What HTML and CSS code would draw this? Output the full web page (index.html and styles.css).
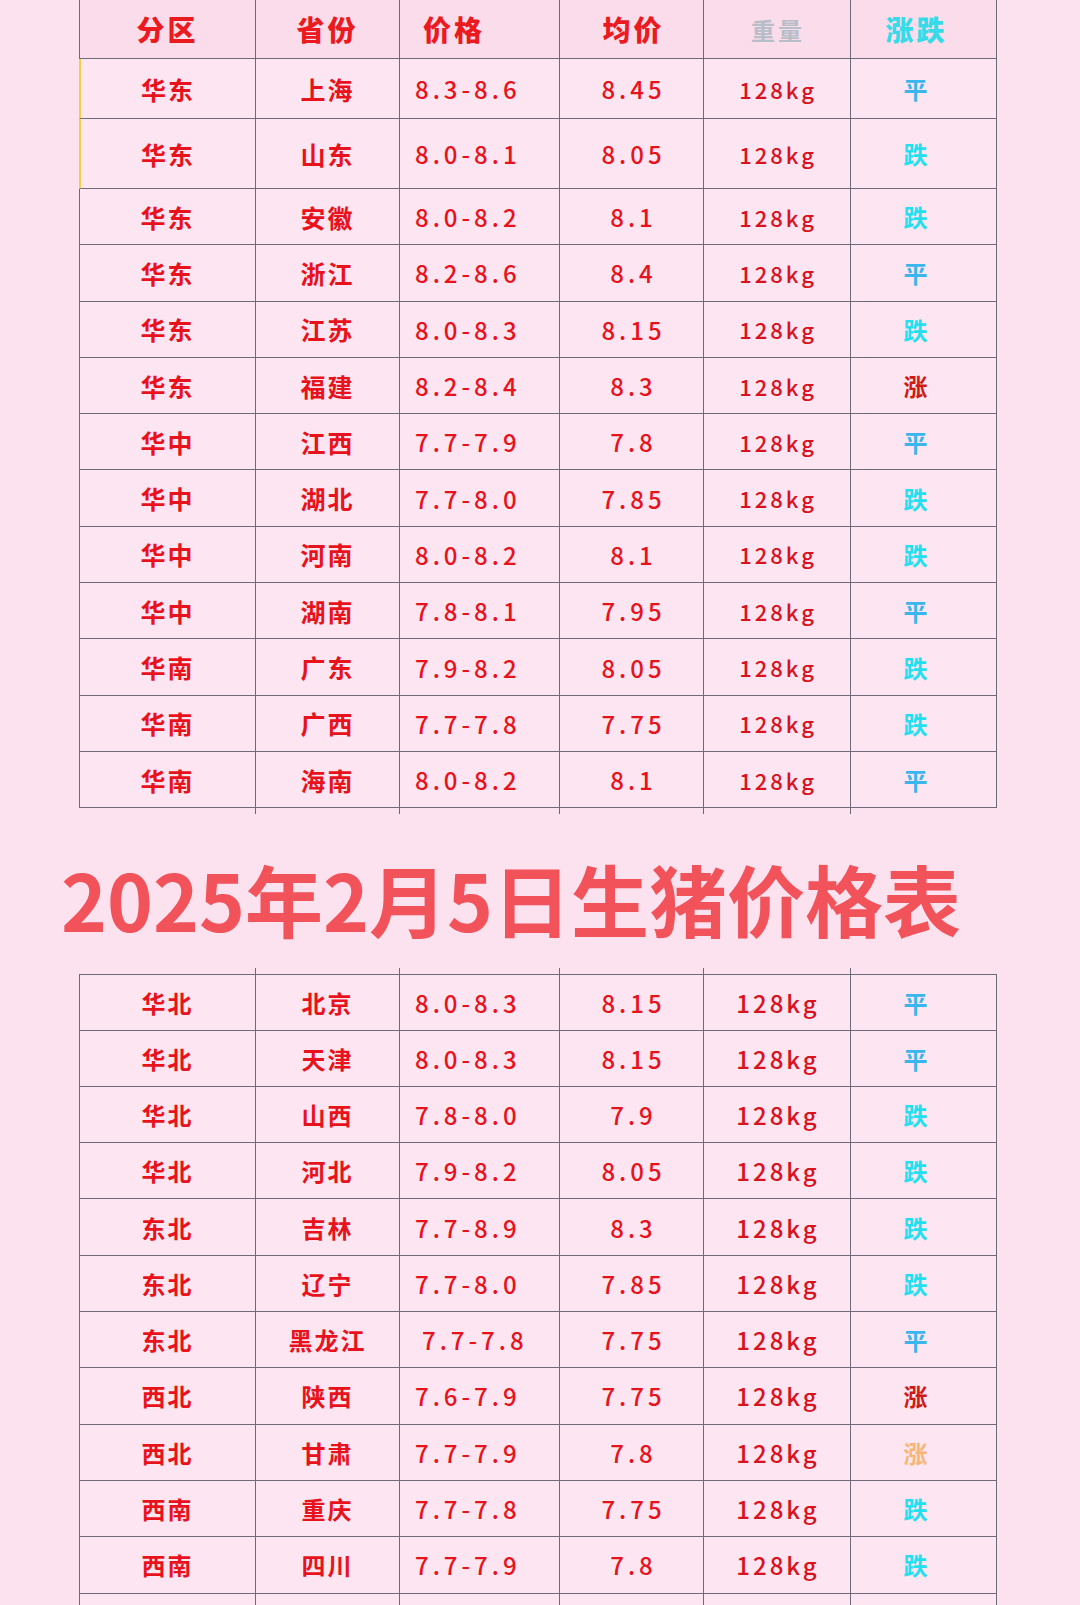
FILE: index.html
```html
<!DOCTYPE html>
<html lang="zh-CN">
<head>
<meta charset="utf-8">
<title>2025年2月5日生猪价格表</title>
<link rel="stylesheet" href="styles.css">
</head>
<body>
<div class="page">
  <div class="table table-top">
    <div class="row head">
      <div class="cell c-region">分区</div>
      <div class="cell c-prov">省份</div>
      <div class="cell c-range h-range">价格</div>
      <div class="cell c-avg">均价</div>
      <div class="cell c-wt h-wt">重量</div>
      <div class="cell c-trend h-trend">涨跌</div>
    </div>
    <div class="row r-first mark"><div class="cell c-region">华东</div><div class="cell c-prov">上海</div><div class="cell c-range">8.3-8.6</div><div class="cell c-avg">8.45</div><div class="cell c-wt">128kg</div><div class="cell c-trend flat">平</div></div>
    <div class="row r-second mark"><div class="cell c-region">华东</div><div class="cell c-prov">山东</div><div class="cell c-range">8.0-8.1</div><div class="cell c-avg">8.05</div><div class="cell c-wt">128kg</div><div class="cell c-trend down">跌</div></div>
    <div class="row"><div class="cell c-region">华东</div><div class="cell c-prov">安徽</div><div class="cell c-range">8.0-8.2</div><div class="cell c-avg">8.1</div><div class="cell c-wt">128kg</div><div class="cell c-trend down">跌</div></div>
    <div class="row"><div class="cell c-region">华东</div><div class="cell c-prov">浙江</div><div class="cell c-range">8.2-8.6</div><div class="cell c-avg">8.4</div><div class="cell c-wt">128kg</div><div class="cell c-trend flat">平</div></div>
    <div class="row"><div class="cell c-region">华东</div><div class="cell c-prov">江苏</div><div class="cell c-range">8.0-8.3</div><div class="cell c-avg">8.15</div><div class="cell c-wt">128kg</div><div class="cell c-trend down">跌</div></div>
    <div class="row"><div class="cell c-region">华东</div><div class="cell c-prov">福建</div><div class="cell c-range">8.2-8.4</div><div class="cell c-avg">8.3</div><div class="cell c-wt">128kg</div><div class="cell c-trend up">涨</div></div>
    <div class="row"><div class="cell c-region">华中</div><div class="cell c-prov">江西</div><div class="cell c-range">7.7-7.9</div><div class="cell c-avg">7.8</div><div class="cell c-wt">128kg</div><div class="cell c-trend flat">平</div></div>
    <div class="row"><div class="cell c-region">华中</div><div class="cell c-prov">湖北</div><div class="cell c-range">7.7-8.0</div><div class="cell c-avg">7.85</div><div class="cell c-wt">128kg</div><div class="cell c-trend down">跌</div></div>
    <div class="row"><div class="cell c-region">华中</div><div class="cell c-prov">河南</div><div class="cell c-range">8.0-8.2</div><div class="cell c-avg">8.1</div><div class="cell c-wt">128kg</div><div class="cell c-trend down">跌</div></div>
    <div class="row"><div class="cell c-region">华中</div><div class="cell c-prov">湖南</div><div class="cell c-range">7.8-8.1</div><div class="cell c-avg">7.95</div><div class="cell c-wt">128kg</div><div class="cell c-trend flat">平</div></div>
    <div class="row"><div class="cell c-region">华南</div><div class="cell c-prov">广东</div><div class="cell c-range">7.9-8.2</div><div class="cell c-avg">8.05</div><div class="cell c-wt">128kg</div><div class="cell c-trend down">跌</div></div>
    <div class="row"><div class="cell c-region">华南</div><div class="cell c-prov">广西</div><div class="cell c-range">7.7-7.8</div><div class="cell c-avg">7.75</div><div class="cell c-wt">128kg</div><div class="cell c-trend down">跌</div></div>
    <div class="row"><div class="cell c-region">华南</div><div class="cell c-prov">海南</div><div class="cell c-range">8.0-8.2</div><div class="cell c-avg">8.1</div><div class="cell c-wt">128kg</div><div class="cell c-trend flat">平</div></div>
    <div class="row stub"><div class="cell"></div><div class="cell"></div><div class="cell"></div><div class="cell"></div><div class="cell"></div><div class="cell"></div></div>
  </div>

  <h1 class="title">2025年2月5日生猪价格表</h1>

  <div class="table table-bottom">
    <div class="row stub stub-top"><div class="cell"></div><div class="cell"></div><div class="cell"></div><div class="cell"></div><div class="cell"></div><div class="cell"></div></div>
    <div class="row r-open"><div class="cell c-region">华北</div><div class="cell c-prov">北京</div><div class="cell c-range">8.0-8.3</div><div class="cell c-avg">8.15</div><div class="cell c-wt">128kg</div><div class="cell c-trend flat">平</div></div>
    <div class="row"><div class="cell c-region">华北</div><div class="cell c-prov">天津</div><div class="cell c-range">8.0-8.3</div><div class="cell c-avg">8.15</div><div class="cell c-wt">128kg</div><div class="cell c-trend flat">平</div></div>
    <div class="row"><div class="cell c-region">华北</div><div class="cell c-prov">山西</div><div class="cell c-range">7.8-8.0</div><div class="cell c-avg">7.9</div><div class="cell c-wt">128kg</div><div class="cell c-trend down">跌</div></div>
    <div class="row"><div class="cell c-region">华北</div><div class="cell c-prov">河北</div><div class="cell c-range">7.9-8.2</div><div class="cell c-avg">8.05</div><div class="cell c-wt">128kg</div><div class="cell c-trend down">跌</div></div>
    <div class="row"><div class="cell c-region">东北</div><div class="cell c-prov">吉林</div><div class="cell c-range">7.7-8.9</div><div class="cell c-avg">8.3</div><div class="cell c-wt">128kg</div><div class="cell c-trend down">跌</div></div>
    <div class="row"><div class="cell c-region">东北</div><div class="cell c-prov">辽宁</div><div class="cell c-range">7.7-8.0</div><div class="cell c-avg">7.85</div><div class="cell c-wt">128kg</div><div class="cell c-trend down">跌</div></div>
    <div class="row"><div class="cell c-region">东北</div><div class="cell c-prov">黑龙江</div><div class="cell c-range shifted">7.7-7.8</div><div class="cell c-avg">7.75</div><div class="cell c-wt">128kg</div><div class="cell c-trend flat">平</div></div>
    <div class="row"><div class="cell c-region">西北</div><div class="cell c-prov">陕西</div><div class="cell c-range">7.6-7.9</div><div class="cell c-avg">7.75</div><div class="cell c-wt">128kg</div><div class="cell c-trend up">涨</div></div>
    <div class="row"><div class="cell c-region">西北</div><div class="cell c-prov">甘肃</div><div class="cell c-range">7.7-7.9</div><div class="cell c-avg">7.8</div><div class="cell c-wt">128kg</div><div class="cell c-trend up-faded">涨</div></div>
    <div class="row"><div class="cell c-region">西南</div><div class="cell c-prov">重庆</div><div class="cell c-range">7.7-7.8</div><div class="cell c-avg">7.75</div><div class="cell c-wt">128kg</div><div class="cell c-trend down">跌</div></div>
    <div class="row"><div class="cell c-region">西南</div><div class="cell c-prov">四川</div><div class="cell c-range">7.7-7.9</div><div class="cell c-avg">7.8</div><div class="cell c-wt">128kg</div><div class="cell c-trend down">跌</div></div>
    <div class="row"><div class="cell"></div><div class="cell"></div><div class="cell"></div><div class="cell"></div><div class="cell"></div><div class="cell"></div></div>
  </div>
</div>
</body>
</html>
```

FILE: styles.css
```css
html, body {
  margin: 0;
  padding: 0;
  background: #fce2ef;
}

body {
  font-family: "Noto Sans CJK SC", "Noto Sans", sans-serif;
  overflow: hidden;
}

.page {
  width: 1080px;
  height: 1605px;
  overflow: hidden;
  background: #fce2ef;
}

.table {
  margin-left: 79px;
  width: 918px;
}

.row {
  display: grid;
  grid-template-columns: 177px 144px 160px 144px 147px 146px;
  height: 56.3px;
}

.row.head { height: 59px; }
.row.r-first { height: 60px; }
.row.r-second { height: 70px; }

.cell {
  box-sizing: border-box;
  display: flex;
  align-items: center;
  justify-content: center;
  border-right: 1.5px solid #6f6a78;
  border-bottom: 1.5px solid #6f6a78;
  background: #fde5f1;
  color: #e8121c;
  font-size: 25px;
  font-weight: 700;
  letter-spacing: 2px;
  white-space: nowrap;
}

.cell:first-child {
  border-left: 1.5px solid #6f6a78;
}

.row.mark .cell:first-child {
  border-left-color: #f1d23e;
  border-left-width: 2px;
}

/* header */
.head .cell {
  font-size: 28px;
  font-weight: 800;
  letter-spacing: 3px;
  background: #fbdcea;
  color: #ea1a1e;
}
.head .h-range {
  justify-content: flex-start;
  padding-left: 23px;
}
.head .h-wt {
  color: #b8bec8;
  font-size: 24px;
  font-weight: 700;
}
.head .h-trend {
  color: #35dbe8;
}

/* number columns */
.c-range {
  justify-content: flex-start;
  padding-left: 15px;
  font-size: 24px;
  font-weight: 500;
  letter-spacing: 4px;
}
.c-range.shifted { padding-left: 22px; }

.c-avg {
  font-size: 24px;
  font-weight: 500;
  letter-spacing: 4px;
  padding-left: 4px;
}

.c-wt {
  font-size: 22px;
  font-weight: 500;
  letter-spacing: 3px;
  color: #d8121e;
  padding-left: 2px;
}

.c-trend {
  font-size: 24px;
  padding-right: 14px;
}

.flat { color: #3ab6ee; }
.down { color: #22e0f0; }
.up { color: #cf1a16; }
.up-faded { color: #f7b676; }

/* stub rows: only vertical rules poking past the table edge */
.row.stub { height: 6px; }
.row.stub .cell {
  border-bottom: none;
  background: transparent;
}
.row.stub .cell:first-child { border-left-color: transparent; }
.row.stub .cell:last-child { border-right-color: transparent; }

.row.r-open .cell {
  border-top: 1.5px solid #6f6a78;
}

.table-bottom .row .cell {
  font-size: 24px;
}
.table-bottom .c-wt { font-size: 22px; }

.title {
  margin: 44px 0 30px 0;
  padding-left: 61px;
  font-size: 78px;
  line-height: 80px;
  font-weight: 700;
  color: #f2535b;
  letter-spacing: 0;
  white-space: nowrap;
}
```
